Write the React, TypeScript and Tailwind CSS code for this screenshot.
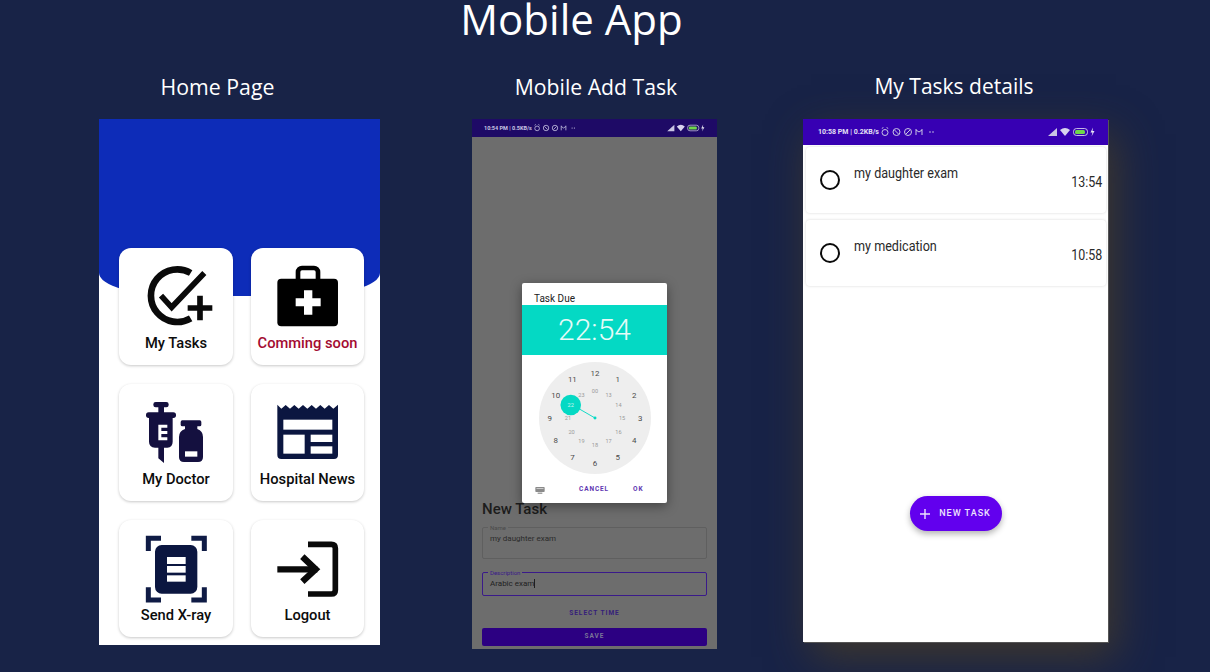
import React from "react";

const outerHours = [
  { t: "12", a: 0 }, { t: "1", a: 30 }, { t: "2", a: 60 }, { t: "3", a: 90 },
  { t: "4", a: 120 }, { t: "5", a: 150 }, { t: "6", a: 180 }, { t: "7", a: 210 },
  { t: "8", a: 240 }, { t: "9", a: 270 }, { t: "10", a: 300 }, { t: "11", a: 330 },
];
const innerHours = [
  { t: "00", a: 0 }, { t: "13", a: 30 }, { t: "14", a: 60 }, { t: "15", a: 90 },
  { t: "16", a: 120 }, { t: "17", a: 150 }, { t: "18", a: 180 }, { t: "19", a: 210 },
  { t: "20", a: 240 }, { t: "21", a: 270 }, { t: "23", a: 330 },
];

const polar = (r: number, deg: number) => {
  const rad = (deg * Math.PI) / 180;
  return { x: 60 + r * Math.sin(rad), y: 60 - r * Math.cos(rad) };
};

const TasksIcon = () => (
  <svg viewBox="138 100 240 200" className="h-[66.67px] w-20">
    <path d="M302 130A79 79 0 1 0 302 266" fill="none" stroke="#0a0a0a" strokeWidth="20" />
    <path d="M213 198L245 233L343 130" fill="none" stroke="#0a0a0a" strokeWidth="17" />
    <path d="M293 235H367M330 198V272" fill="none" stroke="#0a0a0a" strokeWidth="17" />
  </svg>
);

const BagIcon = () => (
  <svg viewBox="532 100 240 200" className="h-[66.67px] w-20">
    <rect x="622" y="115" width="60" height="45" rx="12" fill="none" stroke="#000" strokeWidth="14" />
    <rect x="560" y="147" width="182" height="143" rx="12" fill="#000" />
    <path d="M615 206H640V182H665V206H690V230H665V255H640V230H615Z" fill="#fff" />
  </svg>
);

const DoctorIcon = () => (
  <svg viewBox="138 508 240 200" className="h-[66.67px] w-20">
    <g fill="#14103f">
      <rect x="190" y="517" width="46" height="16" rx="7" />
      <rect x="205" y="530" width="17" height="22" />
      <rect x="168" y="548" width="90" height="17" rx="8" />
      <path d="M177 562H248V636Q248 652 232 654H222V700L205 686V654H195Q177 652 177 636Z" />
      <rect x="272" y="572" width="62" height="18" rx="5" />
      <path d="M285 588H322V598Q339 604 339 622V682Q339 697 324 697H282Q267 697 267 682V622Q267 604 285 598Z" />
    </g>
    <path d="M205 585H232V594H214V604H232V613H214V623H232V632H205Z" fill="#fff" />
    <rect x="285" y="665" width="37" height="16" fill="#fff" />
  </svg>
);

const NewsIcon = () => (
  <svg viewBox="532 508 240 200" className="h-[66.67px] w-20">
    <path
      d="M560 525L572 537L585 526L598 537L611 526L624 537L637 526L650 537L663 526L676 537L689 526L702 537L715 526L728 537L742 525V676Q742 688 730 688H572Q560 688 560 676Z"
      fill="#0b1640"
    />
    <g fill="#fff">
      <rect x="578" y="570" width="147" height="30" />
      <rect x="578" y="615" width="64" height="57" />
      <rect x="660" y="615" width="65" height="22" />
      <rect x="660" y="650" width="65" height="22" />
    </g>
  </svg>
);

const XrayIcon = () => (
  <svg viewBox="138 100 240 205" className="h-[68.33px] w-20">
    <path
      d="M175 148V110H213M304 110H343V148M175 257V295H213M304 295H343V257"
      fill="none"
      stroke="#0f1b45"
      strokeWidth="15"
    />
    <rect x="195" y="130" width="127" height="146" rx="20" fill="#0b1640" />
    <g fill="#fff">
      <rect x="231" y="166" width="56" height="21" />
      <rect x="231" y="193" width="56" height="20" />
      <rect x="231" y="221" width="56" height="19" />
    </g>
  </svg>
);

const LogoutIcon = () => (
  <svg viewBox="532 100 240 205" className="h-[68.33px] w-20">
    <path d="M652 128H722Q734 128 734 140V265Q734 277 722 277H652" fill="none" stroke="#0a0a0a" strokeWidth="17" />
    <path d="M560 203H680" stroke="#0a0a0a" strokeWidth="19" />
    <path d="M635 165L675 203L635 240" fill="none" stroke="#0a0a0a" strokeWidth="19" />
  </svg>
);

const menu = [
  { label: "My Tasks", icon: <TasksIcon />, color: "text-[#0c0c0c]" },
  { label: "Comming soon", icon: <BagIcon />, color: "text-[#a30b31]" },
  { label: "My Doctor", icon: <DoctorIcon />, color: "text-[#0c0c0c]" },
  { label: "Hospital News", icon: <NewsIcon />, color: "text-[#0c0c0c]" },
  { label: "Send X-ray", icon: <XrayIcon />, color: "text-[#0c0c0c]" },
  { label: "Logout", icon: <LogoutIcon />, color: "text-[#0c0c0c]" },
];

const StatusLeftIcons = ({ className }: { className: string }) => (
  <svg viewBox="0 0 54 10" className={className}>
    <g fill="none" stroke="#c9c5e4" strokeWidth="1">
      <circle cx="4" cy="5.5" r="3" />
      <path d="M0.8 1.5L2.4 0.5M7.2 1.5L5.6 0.5" />
      <circle cx="15.5" cy="5" r="3.5" />
      <path d="M13.5 3L17.5 7" />
      <circle cx="27" cy="5" r="3.5" />
      <path d="M25 7L29 3" />
      <path d="M35 2V8M41 2V8M35 3L38 5L41 3" />
    </g>
    <circle cx="49" cy="5" r="0.8" fill="#c9c5e4" />
    <circle cx="52" cy="5" r="0.8" fill="#c9c5e4" />
  </svg>
);

const StatusRightIcons = ({ className }: { className: string }) => (
  <svg viewBox="0 0 47 10" className={className}>
    <path d="M0 9L9 1V9Z" fill="#c9c5e4" />
    <path d="M12 3Q17 -1 22 3L17 9Z" fill="#d8d4ee" />
    <rect x="25.5" y="1.5" width="14" height="7" rx="3" fill="none" stroke="#e8e6f5" strokeWidth="0.8" />
    <rect x="27" y="3" width="10" height="4" rx="1.5" fill="#6fd64a" />
    <path d="M45 0.5L42.5 5.5H44.5L43.5 9.5L46.5 4H44.5Z" fill="#e8e6f5" />
  </svg>
);

const ClockFace = () => {
  const picked = polar(27, 300);
  return (
    <svg viewBox="0 0 120 120" className="h-[112px] w-[112px]">
      <circle cx="60" cy="60" r="60" fill="#eeeeee" />
      <path d={`M60 60L${picked.x} ${picked.y}`} stroke="#04d9c4" strokeWidth="1" />
      <circle cx="60" cy="60" r="1.6" fill="#04d9c4" />
      <circle cx="34" cy="46" r="11" fill="#04d9c4" />
      <text x="34" y="48" textAnchor="middle" fontSize="6" fill="#c9f5ef" fontFamily="Roboto, sans-serif">22</text>
      {outerHours.map((h) => {
        const p = polar(48.5, h.a);
        return (
          <text key={h.t} x={p.x} y={p.y + 3} textAnchor="middle" fontSize="8.5" fill="#4a4a4a" fontFamily="Roboto, sans-serif">
            {h.t}
          </text>
        );
      })}
      {innerHours.map((h) => {
        const p = polar(29, h.a);
        return (
          <text key={h.t} x={p.x} y={p.y + 2.2} textAnchor="middle" fontSize="6" fill="#9a9a9a" fontFamily="Roboto, sans-serif">
            {h.t}
          </text>
        );
      })}
    </svg>
  );
};

const TaskRow = ({ title, time }: { title: string; time: string }) => (
  <div className="flex h-[66px] items-start rounded-[4px] bg-white pr-[4px] shadow-[0_0_3px_rgba(0,0,0,0.16)]">
    <div className="ml-[14px] mt-[23px] h-5 w-5 shrink-0 rounded-full border-[2.5px] border-[#0a0a0a]" />
    <span className="ml-[14px] mt-[17px] origin-left scale-x-90 whitespace-nowrap text-[14px] leading-[18px] text-[#2a2a2a]">{title}</span>
    <span className="ml-auto mt-[25px] origin-right scale-x-[0.83] text-[15px] leading-5 text-[#2a2a2a]">{time}</span>
  </div>
);

export default function App() {
  return (
    <div className="h-[672px] w-[1210px] overflow-hidden bg-[#182347] font-['Open_Sans',sans-serif] text-white">
      <h1 className="h-[46px] pr-[67px] text-center text-[42px] font-normal leading-[38px]">Mobile App</h1>

      <div className="flex pl-[99px] pt-[25px]">
        {/* Home page */}
        <div className="w-[281px]">
          <div className="h-[48px] pr-[44px] text-center text-[21.3px] leading-[32px]">Home Page</div>
          <div className="h-[526px] bg-white font-['Roboto',sans-serif]">
            <div className="h-[177px] rounded-b-[80px_23px] bg-[#0d2cb8]" />
            <div className="relative -mt-[48px] grid grid-cols-[114px_113px] gap-x-[18px] gap-y-[19px] pl-5">
              {menu.map((item) => (
                <div
                  key={item.label}
                  className="flex h-[117px] flex-col items-center rounded-xl bg-white pt-[15px] shadow-[0_1px_3px_rgba(0,0,0,0.22)]"
                >
                  <div className="h-[67px]">{item.icon}</div>
                  <span className={`mt-[3px] whitespace-nowrap text-[14.7px] font-medium leading-5 ${item.color}`}>{item.label}</span>
                </div>
              ))}
            </div>
          </div>
        </div>

        {/* Add task */}
        <div className="ml-[92px] w-[245px]">
          <div className="h-[48px] pl-[3px] text-center text-[21.2px] leading-[32px]">Mobile Add Task</div>
          <div className="relative flex h-[530px] flex-col bg-[#6d6d6d] font-['Roboto',sans-serif]">
            <div className="flex h-[18px] items-center bg-[#1e0a66] pl-[12px] pr-[12px]">
              <span className="whitespace-nowrap text-[5.5px] font-bold text-[#c9c5e4]">10:54 PM | 0.5KB/s</span>
              <StatusLeftIcons className="ml-[2px] h-[8px] w-[42px]" />
              <StatusRightIcons className="ml-auto h-[8px] w-[38px]" />
            </div>

            <div className="mt-auto px-[10px] pb-[3px]">
              <div className="text-[15px] font-medium leading-5 text-[#1c1c1c]">New Task</div>
              <div className="relative mt-[8px] h-[32px] rounded-[2px] border border-[#5f5f5f] px-[7px] pt-[5px] text-[8px] leading-3 text-[#2b2b2b]">
                <span className="absolute -top-[4px] left-[5px] bg-[#6d6d6d] px-[2px] text-[6px] leading-[8px] text-[#4a4a4a]">Name</span>
                my daughter exam
              </div>
              <div className="relative mt-[13px] h-[24px] rounded-[2px] border border-[#3a1a8a] px-[7px] pt-[5px] text-[8px] leading-3 text-[#1f1f1f]">
                <span className="absolute -top-[4px] left-[5px] bg-[#6d6d6d] px-[2px] text-[6px] leading-[8px] text-[#3a1a8a]">Description</span>
                Arabic exam<span className="border-l border-[#1f1f1f]" />
              </div>
              <div className="mt-[12px] text-center text-[6.5px] font-bold leading-[10px] tracking-[1px] text-[#35207a]">SELECT TIME</div>
              <div className="mt-[10px] flex h-[18px] items-center justify-center rounded-[2px] bg-[#2c0082] text-[6.5px] font-bold tracking-[1px] text-[#7a7698]">
                SAVE
              </div>
            </div>

            {/* time picker dialog */}
            <div className="absolute left-[50px] top-[164px] flex h-[220px] w-[145px] flex-col rounded-[2px] bg-white shadow-[0_3px_12px_rgba(0,0,0,0.4)]">
              <div className="h-[22px] pl-[12px] pt-[6px] text-[10px] font-normal leading-[20px] text-[#222]">Task Due</div>
              <div className="flex h-[50px] items-center justify-center bg-[#04d9c4] text-[30px] font-light leading-none text-[#e6fbf8]">22:54</div>
              <div className="flex justify-center pt-[7px]">
                <ClockFace />
              </div>
              <div className="mt-auto flex h-[22px] items-center pb-[4px] text-[6.5px] font-bold tracking-[0.9px] text-[#5e35b1]">
                <svg viewBox="0 0 12 9" className="ml-[13px] h-[7px] w-[10px]">
                  <rect width="12" height="6.5" rx="1" fill="#8a8a8a" />
                  <rect x="1.5" y="1.5" width="9" height="1" fill="#dddddd" />
                  <rect x="3" y="7.2" width="6" height="1.5" fill="#8a8a8a" />
                </svg>
                <span className="ml-[34px]">CANCEL</span>
                <span className="ml-[24px]">OK</span>
              </div>
            </div>
          </div>
        </div>

        {/* Task details */}
        <div className="ml-[86px] w-[305px]">
          <div className="h-[48px] pr-[3px] text-center text-[21px] leading-[30px]">My Tasks details</div>
          <div className="flex h-[523px] flex-col bg-white font-['Roboto',sans-serif] shadow-[1px_1px_0_#555,8px_15px_40px_rgba(70,60,40,0.85)]">
            <div className="flex h-[26px] items-center bg-[#3700b3] pl-[15px] pr-[13px]">
              <span className="whitespace-nowrap text-[7px] font-bold text-[#e4e1f4]">10:58 PM | 0.2KB/s</span>
              <StatusLeftIcons className="ml-[2px] h-[10px] w-[54px]" />
              <StatusRightIcons className="ml-auto h-[10px] w-[47px]" />
            </div>
            <div className="flex flex-col gap-[7px] pl-[3px] pr-[2px] pt-[2px]">
              <TaskRow title="my daughter exam" time="13:54" />
              <TaskRow title="my medication" time="10:58" />
            </div>
            <div className="mt-[210px] flex justify-center">
              <div className="flex h-[35px] w-[92px] items-center justify-center gap-[9px] rounded-full bg-[#6200ee] text-[9px] font-medium tracking-[1px] text-[#ece2fd] shadow-[0_3px_6px_rgba(0,0,0,0.3)]">
                <svg viewBox="0 0 10 10" className="h-[10px] w-[10px]">
                  <path d="M5 0V10M0 5H10" stroke="#ece2fd" strokeWidth="1.4" />
                </svg>
                NEW TASK
              </div>
            </div>
          </div>
        </div>
      </div>
    </div>
  );
}
